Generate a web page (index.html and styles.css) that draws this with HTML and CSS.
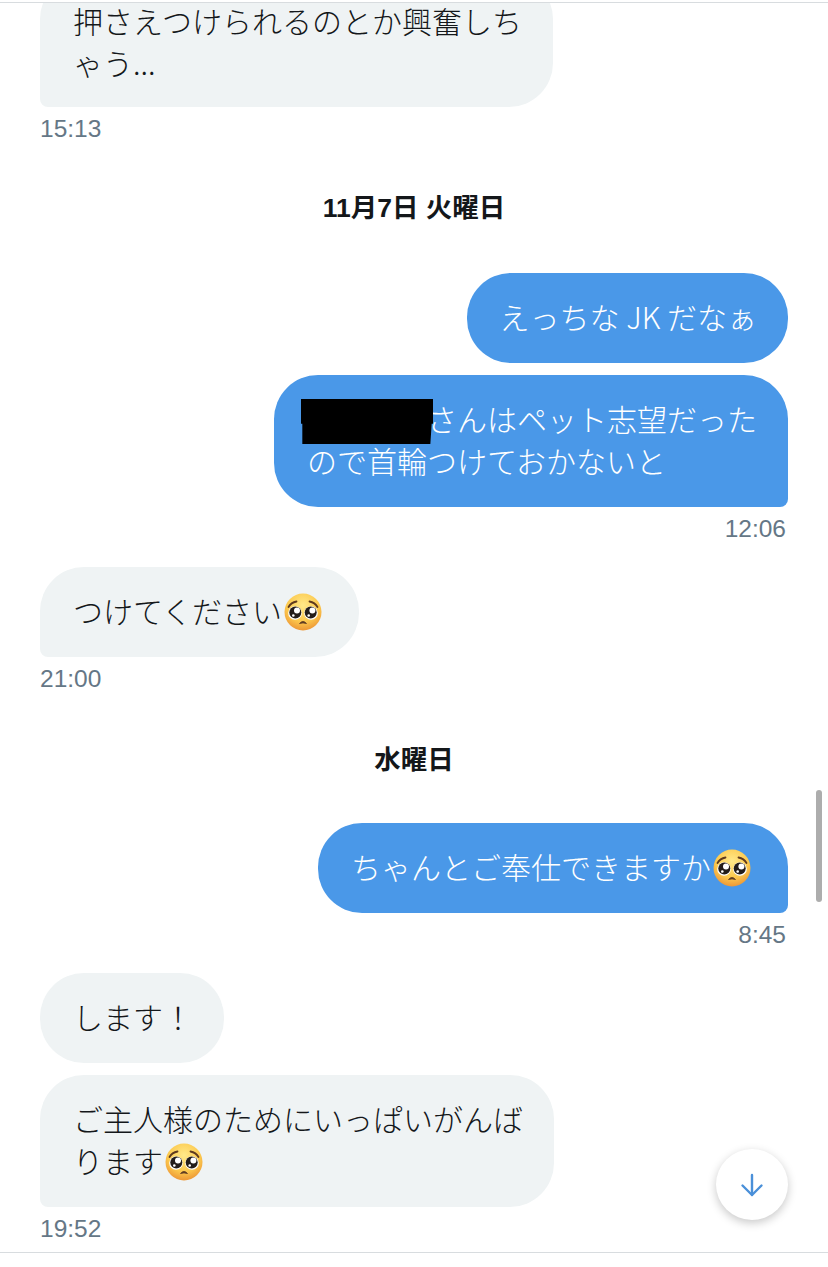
FILE: index.html
```html
<!DOCTYPE html>
<html lang="ja">
<head>
  <meta charset="UTF-8">
  <meta name="viewport" content="width=device-width, initial-scale=1.0">
  <title>Messages</title>
  <link rel="stylesheet" href="styles.css">
</head>
<body>
  <svg class="defs" width="0" height="0">
    <defs>
      <radialGradient id="face" cx="50%" cy="32%" r="72%">
        <stop offset="0%" stop-color="#ffe98a"/>
        <stop offset="60%" stop-color="#fcc94e"/>
        <stop offset="100%" stop-color="#ea8f32"/>
      </radialGradient>
      <symbol id="pleading" viewBox="0 0 38 38">
        <circle cx="19" cy="19" r="18.500" fill="url(#face)"/>
        <path d="M4.500 14 Q7 9.500 12.500 8.500" fill="none" stroke="#5f3a1e" stroke-width="1.800" stroke-linecap="round"/>
        <path d="M33.500 14 Q31 9.500 25.500 8.500" fill="none" stroke="#5f3a1e" stroke-width="1.800" stroke-linecap="round"/>
        <circle cx="11" cy="20" r="6.800" fill="#fff"/>
        <circle cx="27" cy="20" r="6.800" fill="#fff"/>
        <circle cx="11.300" cy="19.600" r="6" fill="#231d1b"/>
        <circle cx="26.700" cy="19.600" r="6" fill="#231d1b"/>
        <circle cx="13" cy="17.500" r="3" fill="#fff"/>
        <circle cx="28.400" cy="17.500" r="3" fill="#fff"/>
        <circle cx="9.300" cy="22.500" r="1.300" fill="#fff"/>
        <circle cx="24.700" cy="22.500" r="1.300" fill="#fff"/>
        <path d="M15.500 30.500 Q19 26.300 22.500 30.500 Q19 29.300 15.500 30.500Z" fill="#5f3c22" stroke="#5f3c22" stroke-width=".8" stroke-linejoin="round"/>
      </symbol>
    </defs>
  </svg>

  <div class="screen">
    <div class="thread">
      <div class="msg msg-in first">
        <div class="bubble tail">押さえつけられるのとか興奮しち<br>ゃう...</div>
        <div class="time">15:13</div>
      </div>

      <div class="day day-one">11月7日 火曜日</div>

      <div class="msg msg-out">
        <div class="bubble">えっちな JK だなぁ</div>
      </div>
      <div class="msg msg-out next">
        <div class="bubble tail"><span class="redact"></span>さんはペット志望だった<br>ので首輪つけておかないと</div>
        <div class="time">12:06</div>
      </div>

      <div class="msg msg-in gap-a">
        <div class="bubble tail">つけてください<svg class="emoji"><use href="#pleading"/></svg></div>
        <div class="time">21:00</div>
      </div>

      <div class="day day-two">水曜日</div>

      <div class="msg msg-out">
        <div class="bubble tail">ちゃんとご奉仕できますか<svg class="emoji"><use href="#pleading"/></svg></div>
        <div class="time">8:45</div>
      </div>

      <div class="msg msg-in gap-b">
        <div class="bubble">します！</div>
      </div>
      <div class="msg msg-in next">
        <div class="bubble tail">ご主人様のためにいっぱいがんば<br>ります<svg class="emoji"><use href="#pleading"/></svg></div>
        <div class="time">19:52</div>
      </div>
    </div>

    <div class="scrollbar"></div>
    <button class="to-bottom">
      <svg width="24" height="24" viewBox="0 0 24 24" fill="none" stroke="#4a90d9" stroke-width="2.400" stroke-linecap="round" stroke-linejoin="round">
        <path d="M12 2v20"/>
        <path d="M2.500 12.500L12 22l9.500-9.500"/>
      </svg>
    </button>
  </div>
</body>
</html>
```
FILE: styles.css
```css
body {
  margin: 0;
  background-color: #fff;
  font-family: "Liberation Sans", "Noto Sans CJK JP", sans-serif;
  color: #14171a;
}

.defs {
  display: block;
}

.screen {
  position: relative;
  height: 1249px;
  margin-top: 2px;
  border-top: 1px solid #d8dcdf;
  border-bottom: 1px solid #d8dcdf;
  overflow: hidden;
}

.thread {
  display: flex;
  flex-direction: column;
  padding: 0 40px;
  margin-top: -28px;
}

.msg {
  display: flex;
  flex-direction: column;
}

.msg-in {
  align-items: flex-start;
}

.msg-out {
  align-items: flex-end;
}

.next {
  margin-top: 12px;
}

.gap-a {
  margin-top: 24px;
}

.gap-b {
  margin-top: 24px;
}

.bubble {
  padding: 22px 31px 26px 33px;
  font-family: "Noto Sans CJK JP", sans-serif;
  font-size: 30px;
  font-weight: 300;
  line-height: 42px;
  white-space: nowrap;
  border-radius: 44px;
}

.first .bubble {
  padding-top: 24px;
  padding-bottom: 24px;
}

.msg-in .bubble {
  background-color: #eff3f4;
}

.msg-out .bubble {
  background-color: #4a98e8;
  color: #fff;
}

.msg-in .tail {
  border-bottom-left-radius: 8px;
}

.msg-out .tail {
  border-bottom-right-radius: 8px;
}

.time {
  height: 29px;
  margin-top: 7px;
  padding-right: 2px;
  font-size: 24.5px;
  line-height: 29px;
  color: #657786;
}

.day {
  font-size: 26.5px;
  font-weight: bold;
  line-height: 30px;
  text-align: center;
}

.day-one {
  margin-top: 50px;
  margin-bottom: 50px;
}

.day-two {
  margin-top: 52px;
  margin-bottom: 48px;
}

.emoji {
  display: inline-block;
  width: 38px;
  height: 38px;
  margin: 0 6px 0 2px;
  vertical-align: -8px;
}

/* sits over the name in the screenshot */
.redact {
  position: relative;
  display: inline-block;
  width: 120px;
  height: 1px;
}

.redact::before {
  content: "";
  position: absolute;
  left: -6px;
  bottom: -13px;
  width: 132px;
  height: 45px;
  background-color: #000;
  clip-path: polygon(0 0, 100% 0, 100% 55%, 99% 55%, 98% 100%, 1% 100%, 1% 55%, 0 55%);
}

.scrollbar {
  position: absolute;
  top: 787px;
  right: 6px;
  width: 6px;
  height: 112px;
  border-radius: 3px;
  background-color: #adadad;
}

.to-bottom {
  position: absolute;
  top: 1146px;
  left: 716px;
  width: 72px;
  height: 71px;
  padding: 0;
  display: flex;
  align-items: center;
  justify-content: center;
  border: none;
  border-radius: 50%;
  background-color: #fff;
  box-shadow: 0 3px 10px rgba(0, 0, 0, 0.22);
}
```
